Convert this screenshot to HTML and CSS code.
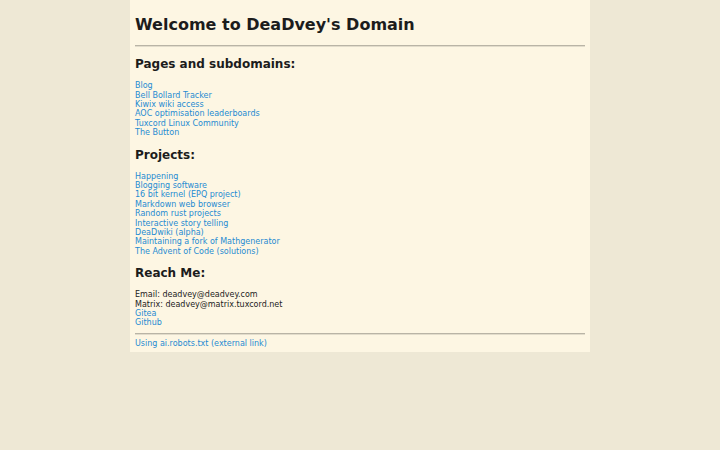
FILE: index.html
```html
<!DOCTYPE html>
<html lang="en">
<head>
  <meta charset="UTF-8">
  <meta name="viewport" content="width=device-width, initial-scale=1.0">
  <title>DeaDvey's Domain</title>
  <link rel="stylesheet" href="styles.css">
</head>
<body>
  <div class="page">
    <h1>Welcome to DeaDvey's Domain</h1>
    <hr>

    <h2>Pages and subdomains:</h2>
    <p>
      <a href="#">Blog</a><br>
      <a href="#">Bell Bollard Tracker</a><br>
      <a href="#">Kiwix wiki access</a><br>
      <a href="#">AOC optimisation leaderboards</a><br>
      <a href="#">Tuxcord Linux Community</a><br>
      <a href="#">The Button</a>
    </p>

    <h2>Projects:</h2>
    <p>
      <a href="#">Happening</a><br>
      <a href="#">Blogging software</a><br>
      <a href="#">16 bit kernel (EPQ project)</a><br>
      <a href="#">Markdown web browser</a><br>
      <a href="#">Random rust projects</a><br>
      <a href="#">Interactive story telling</a><br>
      <a href="#">DeaDwiki (alpha)</a><br>
      <a href="#">Maintaining a fork of Mathgenerator</a><br>
      <a href="#">The Advent of Code (solutions)</a>
    </p>

    <h2>Reach Me:</h2>
    <p>
      Email: deadvey@deadvey.com<br>
      Matrix: deadvey@matrix.tuxcord.net<br>
      <a href="#">Gitea</a><br>
      <a href="#">Github</a>
    </p>

    <hr>
    <div class="footer">
      <a href="#">Using ai.robots.txt (external link)</a>
    </div>
  </div>
</body>
</html>
```

FILE: styles.css
```css
/* Colores solarized */
body {
  background-color: #eee8d5;
  color: #1c1c1c;
  font-family: 'DejaVu Sans', sans-serif;
  font-size: 8px;
  line-height: 9.4px;
  margin: 0;
}
.page {
  background-color: #fdf6e3;
  width: 450px;
  margin: 0 auto;
  padding: 5px 5px 4px;
}
h1 {
  font-size: 16px;
  line-height: 18.6px;
  margin: 11px 0 10.5px;
}
h2 {
  font-size: 12px;
  line-height: 14px;
  margin: 10px 0;
}
p {
  margin: 0;
}
a {
  color: #268bd2;
  text-decoration: none;
}
hr {
  border: none;
  border-top: 1px solid #b9b4a6;
  border-bottom: 1px solid #e2dccb;
  margin: 5px 0 4px;
}
.footer {
  margin: 0;
}
```
